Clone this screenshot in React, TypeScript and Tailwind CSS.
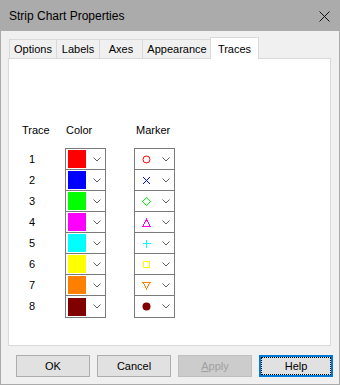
import type { ReactNode } from 'react'

const TRACES = [
  { n: 1, color: '#ff0000', marker: 'circle' },
  { n: 2, color: '#0000ff', marker: 'cross' },
  { n: 3, color: '#00ff00', marker: 'diamond' },
  { n: 4, color: '#ff00ff', marker: 'triangle' },
  { n: 5, color: '#00ffff', marker: 'plus' },
  { n: 6, color: '#ffff00', marker: 'square' },
  { n: 7, color: '#ff8000', marker: 'down' },
  { n: 8, color: '#800000', marker: 'dot' },
]

const TABS = [
  { label: 'Options', w: 'w-[48px]' },
  { label: 'Labels', w: 'w-[44px]' },
  { label: 'Axes', w: 'w-[44px]' },
  { label: 'Appearance', w: 'w-[70px]' },
]

function Marker({ kind, color }: { kind: string; color: string }) {
  let shape: ReactNode = null
  if (kind === 'circle') shape = <circle cx="4.5" cy="4.5" r="3.5" fill="none" stroke={color} />
  if (kind === 'cross') shape = <path d="M1 1L8 8M8 1L1 8" stroke={color} shapeRendering="crispEdges" />
  if (kind === 'diamond')
    shape = <polygon points="4.5,0.5 8.5,4.5 4.5,8.5 0.5,4.5" fill="none" stroke={color} shapeRendering="crispEdges" />
  if (kind === 'triangle')
    shape = <polygon points="4.5,1.5 8,8 1,8" fill="none" stroke={color} shapeRendering="crispEdges" />
  if (kind === 'plus') shape = <path d="M4.5 0.5V8.5M0.5 4.5H8.5" stroke={color} shapeRendering="crispEdges" />
  if (kind === 'square')
    shape = <rect x="1.5" y="1.5" width="6" height="6" fill="none" stroke={color} shapeRendering="crispEdges" />
  if (kind === 'down')
    shape = <polygon points="1,1.5 8,1.5 4.5,8" fill="none" stroke={color} shapeRendering="crispEdges" />
  if (kind === 'dot') shape = <circle cx="4.5" cy="4.5" r="4" fill={color} />
  return (
    <svg width="9" height="9" viewBox="0 0 9 9" className="block">
      {shape}
    </svg>
  )
}

function Chevron() {
  return (
    <svg width="8" height="5" viewBox="0 0 8 5" className="block">
      <polyline points="0.5,0.5 4,4 7.5,0.5" fill="none" stroke="#606060" />
    </svg>
  )
}

export default function App() {
  return (
    <div className="w-[340px] h-[385px] border border-[#aaaaaa] bg-[#f0f0f0] flex flex-col font-['Liberation_Sans',Arial,sans-serif] text-[11px] text-black">
      {/* title bar */}
      <div className="h-[30px] bg-[#ababab] flex items-center justify-between pl-[8px] pr-[9px]">
        <span className="text-[12px] leading-none">Strip Chart Properties</span>
        <svg width="11" height="11" viewBox="0 0 11 11" className="block">
          <path d="M0.5 0.5L10.5 10.5M10.5 0.5L0.5 10.5" stroke="#111" />
        </svg>
      </div>

      <div className="pl-[7px] pt-[6px]">
        {/* tabs */}
        <div className="flex items-end h-[21px] ml-px">
          {TABS.map((t, i) => (
            <div
              key={t.label}
              className={`${t.w} h-[19px] border-t border-l border-r border-[#d9d9d9] flex items-center justify-center pt-px ${i > 0 ? '-ml-px' : ''}`}
            >
              {t.label}
            </div>
          ))}
          <div className="relative z-10 w-[49px] h-[22px] -ml-[2px] -mb-px bg-white border-t border-l border-r border-[#d9d9d9] flex items-start justify-center pt-[3px]">
            Traces
          </div>
        </div>

        {/* panel */}
        <div className="w-[323px] h-[288px] bg-white border border-[#d9d9d9] pt-[64px] pl-[13px]">
          <div className="flex h-[14px] items-center">
            <div className="w-[44px]">Trace</div>
            <div className="w-[70px]">Color</div>
            <div>Marker</div>
          </div>
          <div className="mt-[11px] flex flex-col">
            {TRACES.map((t, i) => (
              <div key={t.n} className="flex h-[21px] items-start">
                <div className="w-[43px] h-[22px] flex items-center pl-[7px]">{t.n}</div>
                <div
                  className={`w-[41px] ${i === 7 ? 'h-[23px]' : 'h-[22px]'} border border-[#7a7a7a] flex items-center pl-[2px]`}
                >
                  <div className="w-[18px] h-[18px]" style={{ backgroundColor: t.color }} />
                  <div className="ml-[7px]">
                    <Chevron />
                  </div>
                </div>
                <div
                  className={`ml-[28px] w-[41px] ${i === 7 ? 'h-[23px]' : 'h-[22px]'} border border-[#7a7a7a] flex items-center pl-[7px]`}
                >
                  <Marker kind={t.marker} color={t.color} />
                  <div className="ml-[11px]">
                    <Chevron />
                  </div>
                </div>
              </div>
            ))}
          </div>
        </div>
      </div>

      {/* buttons */}
      <div className="flex gap-[7px] pl-[15px] mt-[9px]">
        <button className="w-[74px] h-[22px] bg-[#e1e1e1] border border-[#adadad]">OK</button>
        <button className="w-[74px] h-[22px] bg-[#e1e1e1] border border-[#adadad]">Cancel</button>
        <button className="w-[74px] h-[22px] bg-[#cccccc] border border-[#bfbfbf] text-[#a0a0a0]">
          <span className="underline">A</span>pply
        </button>
        <button className="relative w-[74px] h-[22px] bg-[#e1e1e1] border-2 border-[#0078d7]">
          <span className="absolute inset-0 border border-dotted border-black" />
          Help
        </button>
      </div>
    </div>
  )
}
